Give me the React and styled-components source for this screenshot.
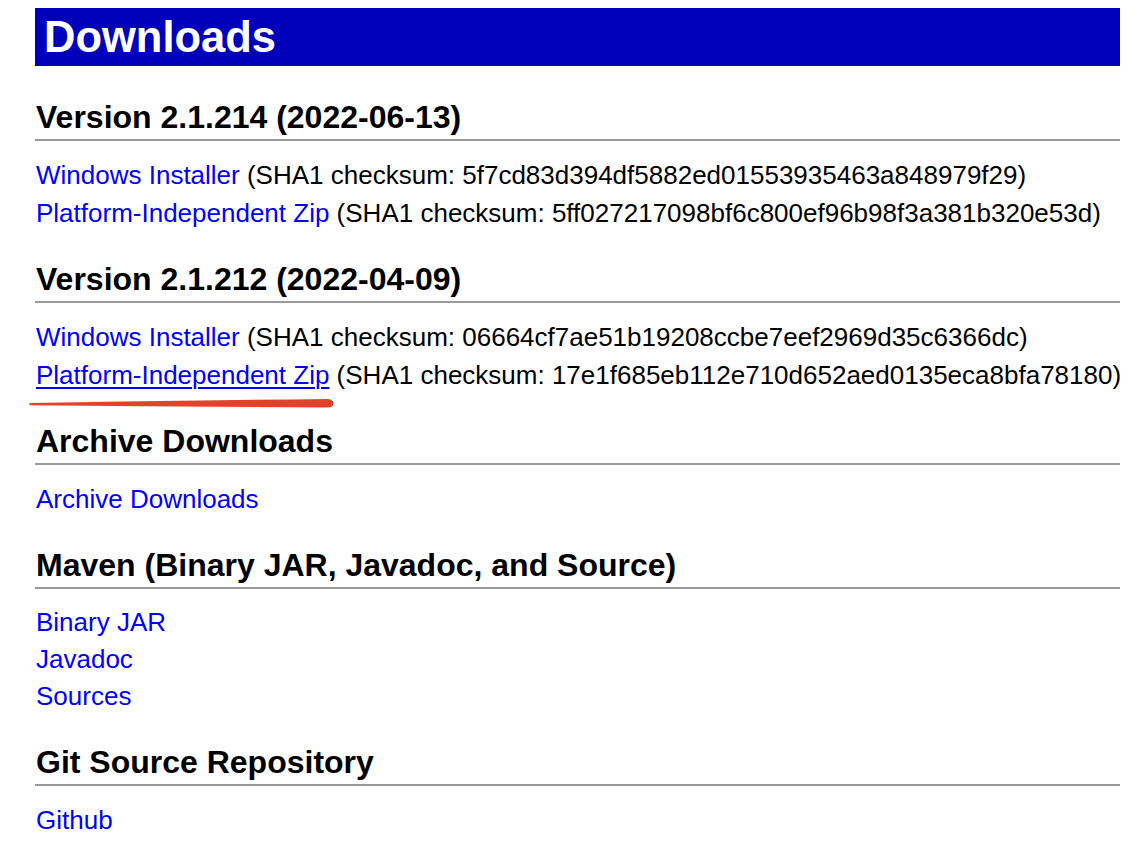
import React, { Fragment } from "react";
import styled, { createGlobalStyle } from "styled-components";

// Global page styles
const GlobalStyle = createGlobalStyle`
  html, body {
    margin: 0;
    padding: 0;
    background: #ffffff;
  }
  body {
    font-family: "Liberation Sans", Arial, sans-serif;
    color: #000000;
  }
`;

const Page = styled.div`
  padding: 8px 22px 20px 35px;
`;

const Banner = styled.h1`
  margin: 0;
  height: 58px;
  line-height: 58px;
  padding-left: 9px;
  background: #0000bb;
  color: #ffffff;
  font-size: 43.5px;
  font-weight: bold;
`;

const Section = styled.section`
  margin-top: ${(p) => (p.first ? "32px" : "28px")};
`;

const Heading = styled.h2`
  margin: 0;
  font-size: 32px;
  line-height: 38px;
  font-weight: bold;
  padding: 0 0 3px 1px;
  border-bottom: 2px solid #999999;
`;

const Links = styled.div`
  margin-top: 15px;
  padding-left: 1px;
  font-size: 26px;
  line-height: ${(p) => (p.tight ? "37px" : "38px")};
`;

const Row = styled.div`
  position: relative;
  white-space: nowrap;
`;

const Link = styled.a`
  color: #0000ff;
  text-decoration: ${(p) => (p.underline ? "underline" : "none")};
  text-decoration-thickness: 2px;
  text-underline-offset: 3px;
`;

// hand-drawn red annotation stroke under a link
const Scribble = styled.svg`
  position: absolute;
  left: -8px;
  top: 40px;
  pointer-events: none;
`;

const versions = [
  {
    title: "Version 2.1.214 (2022-06-13)",
    files: [
      { name: "Windows Installer", sum: "5f7cd83d394df5882ed01553935463a848979f29" },
      { name: "Platform-Independent Zip", sum: "5ff027217098bf6c800ef96b98f3a381b320e53d" },
    ],
  },
  {
    title: "Version 2.1.212 (2022-04-09)",
    files: [
      { name: "Windows Installer", sum: "06664cf7ae51b19208ccbe7eef2969d35c6366dc" },
      { name: "Platform-Independent Zip", sum: "17e1f685eb112e710d652aed0135eca8bfa78180", marked: true },
    ],
  },
];

const App = () => {
  return (
    <Fragment>
      <GlobalStyle />
      <Page>
        <Banner>Downloads</Banner>

        {versions.map((v, i) => (
          <Section first={i === 0} key={v.title}>
            <Heading>{v.title}</Heading>
            <Links>
              {v.files.map((f) => (
                <Row key={f.sum}>
                  <Link href="#" underline={f.marked}>{f.name}</Link> (SHA1 checksum: {f.sum})
                  {f.marked && (
                    <Scribble width="310" height="14" viewBox="0 0 310 14">
                      <path
                        d="M2 7 Q 150 4.5 300 3 Q 305.5 3.5 305.5 7.5 Q 305 11.5 300 11.5 Q 150 10.5 2 9.2 Q 0.5 8 2 7 Z"
                        fill="#e5412a"
                      />
                    </Scribble>
                  )}
                </Row>
              ))}
            </Links>
          </Section>
        ))}

        <Section>
          <Heading>Archive Downloads</Heading>
          <Links>
            <Row><Link href="#">Archive Downloads</Link></Row>
          </Links>
        </Section>

        <Section>
          <Heading>Maven (Binary JAR, Javadoc, and Source)</Heading>
          <Links tight>
            <Row><Link href="#">Binary JAR</Link></Row>
            <Row><Link href="#">Javadoc</Link></Row>
            <Row><Link href="#">Sources</Link></Row>
          </Links>
        </Section>

        <Section>
          <Heading>Git Source Repository</Heading>
          <Links>
            <Row><Link href="#">Github</Link></Row>
          </Links>
        </Section>
      </Page>
    </Fragment>
  );
};

export default App;
